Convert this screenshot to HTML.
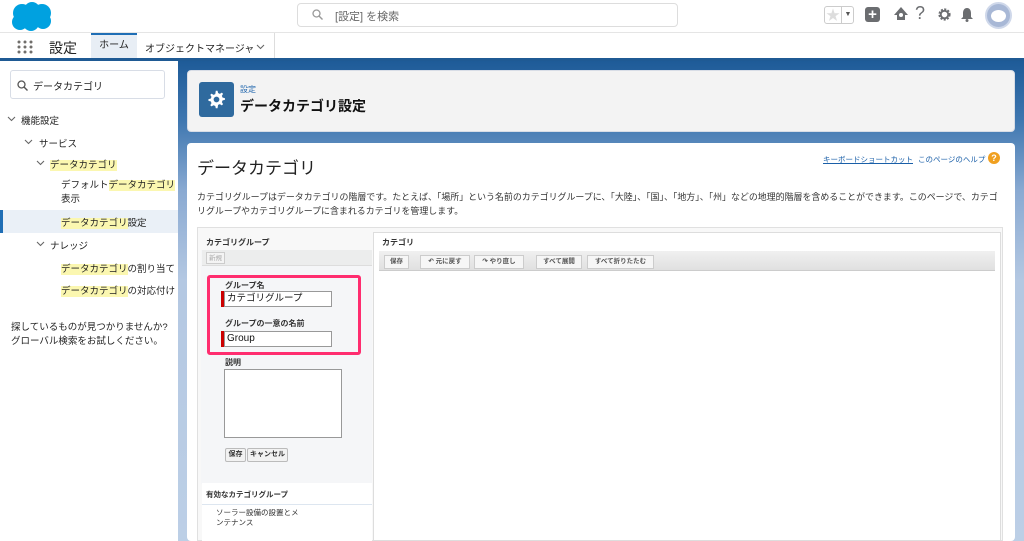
<!DOCTYPE html>
<html><head><meta charset="utf-8"><style>
*{box-sizing:border-box;margin:0;padding:0}
body{width:1024px;height:541px;overflow:hidden;font-family:"Liberation Sans","Noto Sans CJK JP",sans-serif;background:#fff;position:relative;color:#16325c}
.abs{position:absolute}
.hl{background:#fbf7b0}
.chev{position:absolute;width:9px;height:6px}
</style></head><body>
<svg width="0" height="0" style="position:absolute"><defs><symbol id="cv" viewBox="0 0 9 6"><path d="M1 1l3.5 3.5L8 1" fill="none" stroke="#666" stroke-width="1.1"/></symbol></defs></svg>
<!-- header -->
<div class="abs" style="left:0;top:0;width:1024px;height:33px;background:#fff;border-bottom:1px solid #e5e5e5"></div>
<svg class="abs" style="left:10px;top:2px" width="44" height="30" viewBox="0 0 44 30"><g fill="#00a1e0"><circle cx="12" cy="11" r="9"/><circle cx="22" cy="8" r="8"/><circle cx="32" cy="11" r="9"/><circle cx="10" cy="20" r="8"/><circle cx="21" cy="21" r="8"/><circle cx="33" cy="19" r="8"/></g></svg>
<div class="abs" style="left:297px;top:3px;width:381px;height:24px;border:1px solid #ddd;border-radius:4px;background:#fff"></div>
<svg class="abs" style="left:312px;top:9px" width="11" height="11" viewBox="0 0 11 11"><circle cx="4.5" cy="4.5" r="3.5" fill="none" stroke="#999" stroke-width="1.3"/><path d="M7 7l3.5 3.5" stroke="#999" stroke-width="1.4"/></svg>
<div class="abs" style="left:335px;top:8px;font-size:11px;color:#666">[設定] を検索</div>
<div class="abs" style="left:824px;top:6px;width:30px;height:18px;border:1px solid #ccc;border-radius:3px;background:#fff"></div>
<div class="abs" style="left:826px;top:5px;font-size:14px;color:#ddd">★</div>
<div class="abs" style="left:841px;top:6px;width:13px;height:18px;border-left:1px solid #ccc;font-size:7px;color:#555;text-align:center;line-height:18px">▼</div>
<div class="abs" style="left:865px;top:7px;width:15px;height:15px;background:#6b6d70;border-radius:3px;color:#fff;font-size:15px;line-height:15px;text-align:center;font-weight:bold">+</div>
<svg class="abs" style="left:893px;top:6px" width="16" height="16" viewBox="0 0 16 16"><path d="M8 1L1 9h3v5h8V9h3z" fill="#6b6d70"/><circle cx="8" cy="9" r="2" fill="#fff"/></svg>
<div class="abs" style="left:915px;top:3px;font-size:18px;color:#6b6d70">?</div>
<svg class="abs" style="left:937px;top:7px" width="15" height="15" viewBox="0 0 16 16"><circle cx="8" cy="8" r="5" fill="none" stroke="#6b6d70" stroke-width="3" stroke-dasharray="2 1.3"/><circle cx="8" cy="8" r="4" fill="none" stroke="#6b6d70" stroke-width="2"/></svg>
<svg class="abs" style="left:960px;top:7px" width="14" height="15" viewBox="0 0 14 15"><path d="M7 1C4 1 3 4 3 6v4L1 12h12l-2-2V6C11 4 10 1 7 1z" fill="#6b6d70"/><circle cx="7" cy="13.5" r="1.5" fill="#6b6d70"/></svg>
<div class="abs" style="left:985px;top:2px;width:27px;height:27px;border-radius:50%;background:#a8b8d6;border:2px solid #cfd8ea"></div>
<div class="abs" style="left:991px;top:10px;width:15px;height:12px;border-radius:50%;background:#fff"></div>
<!-- nav -->
<div class="abs" style="left:0;top:33px;width:1024px;height:27px;background:#fff"></div>
<div class="abs" style="left:0;top:58px;width:1024px;height:3px;background:#1f5a94"></div>
<svg class="abs" style="left:17px;top:40px" width="16" height="14" viewBox="0 0 16 14"><g fill="#706e6b"><circle cx="2" cy="2" r="1.5"/><circle cx="8" cy="2" r="1.5"/><circle cx="14" cy="2" r="1.5"/><circle cx="2" cy="7" r="1.5"/><circle cx="8" cy="7" r="1.5"/><circle cx="14" cy="7" r="1.5"/><circle cx="2" cy="12" r="1.5"/><circle cx="8" cy="12" r="1.5"/><circle cx="14" cy="12" r="1.5"/></g></svg>
<div class="abs" style="left:49px;top:38px;font-size:14px;color:#222">設定</div>
<div class="abs" style="left:91px;top:33px;width:46px;height:25px;background:#e8eef5;border-top:2px solid #1f6eb5;font-size:10px;line-height:22px;text-align:center;color:#222">ホーム</div>
<div class="abs" style="left:145px;top:40px;font-size:10px;color:#222">オブジェクトマネージャ</div>
<svg class="chev" style="left:256px;top:44px"><use href="#cv"/></svg>
<div class="abs" style="left:274px;top:33px;width:1px;height:25px;background:#ddd"></div>
<!-- background right -->
<div class="abs" style="left:178px;top:61px;width:846px;height:480px;background:linear-gradient(#1e5b98 0px,#3f77b0 60px,#8aaad2 130px,#b4c8e2 220px,#bccfe6 480px)"></div>
<!-- sidebar -->
<div class="abs" style="left:0;top:61px;width:178px;height:480px;background:#fff"></div>
<div class="abs" style="left:10px;top:70px;width:155px;height:29px;border:1px solid #d8dde6;border-radius:3px"></div>
<svg class="abs" style="left:17px;top:80px" width="11" height="11" viewBox="0 0 11 11"><circle cx="4.5" cy="4.5" r="3.5" fill="none" stroke="#555" stroke-width="1.3"/><path d="M7 7l3.5 3.5" stroke="#555" stroke-width="1.4"/></svg>
<div class="abs" style="left:33px;top:78px;font-size:10px;color:#222">データカテゴリ</div>
<div style="font-size:9.5px;color:#222">
<svg class="chev" style="left:7px;top:116px"><use href="#cv"/></svg><div class="abs" style="left:21px;top:113px">機能設定</div>
<svg class="chev" style="left:24px;top:139px"><use href="#cv"/></svg><div class="abs" style="left:39px;top:136px">サービス</div>
<svg class="chev" style="left:36px;top:160px"><use href="#cv"/></svg><div class="abs" style="left:50px;top:157px"><span class="hl">データカテゴリ</span></div>
<div class="abs" style="left:61px;top:179px;line-height:14px">デフォルト<span class="hl">データカテゴリ</span><br>表示</div>
<div class="abs" style="left:0;top:210px;width:178px;height:23px;background:#eaf0f7;border-left:3px solid #1f6eb5"></div>
<div class="abs" style="left:61px;top:215px"><span class="hl">データカテゴリ</span>設定</div>
<svg class="chev" style="left:36px;top:241px"><use href="#cv"/></svg><div class="abs" style="left:50px;top:238px">ナレッジ</div>
<div class="abs" style="left:61px;top:261px"><span class="hl">データカテゴリ</span>の割り当て</div>
<div class="abs" style="left:61px;top:283px"><span class="hl">データカテゴリ</span>の対応付け</div>
<div class="abs" style="left:11px;top:321px;line-height:14px">探しているものが見つかりませんか?<br>グローバル検索をお試しください。</div>
</div>
<!-- header card -->
<div class="abs" style="left:187px;top:70px;width:828px;height:62px;background:#f3f3f3;border:1px solid #d8dde6;border-radius:4px"></div>
<div class="abs" style="left:199px;top:82px;width:35px;height:35px;background:#2f6a9e;border-radius:3px"></div>
<svg class="abs" style="left:206px;top:89px" width="21" height="21" viewBox="0 0 24 24"><path fill="#fff" d="M12 2l2 0 .6 2.6 2 .9 2.3-1.4 1.4 1.4-1.4 2.3.9 2 2.6.6v2l-2.6.6-.9 2 1.4 2.3-1.4 1.4-2.3-1.4-2 .9L14 22h-2l-.6-2.6-2-.9-2.3 1.4-1.4-1.4 1.4-2.3-.9-2L3.6 13.6v-2l2.6-.6.9-2-1.4-2.3 1.4-1.4 2.3 1.4 2-.9z" transform="translate(-.8 0)"/><circle cx="12" cy="12" r="3.3" fill="#2f6a9e"/></svg>
<div class="abs" style="left:240px;top:84px;font-size:8px;color:#2a6cb0">設定</div>
<div class="abs" style="left:240px;top:96px;font-size:14px;font-weight:bold;color:#111">データカテゴリ設定</div>
<!-- main card -->
<div class="abs" style="left:187px;top:143px;width:828px;height:398px;background:#fff;border-radius:4px"></div>
<div class="abs" style="left:197px;top:154px;font-size:17px;color:#222">データカテゴリ</div>
<div class="abs" style="left:823px;top:154px;font-size:7.5px;color:#1a5fa8;text-decoration:underline">キーボードショートカット</div>
<div class="abs" style="left:918px;top:154px;font-size:7.5px;color:#1a5fa8">このページのヘルプ</div>
<div class="abs" style="left:988px;top:152px;width:12px;height:12px;border-radius:50%;background:#f0a020;color:#fff;font-size:9px;text-align:center;line-height:12px;font-weight:bold">?</div>
<div class="abs" style="left:197px;top:190px;width:808px;font-size:8.95px;line-height:14px;color:#333">カテゴリグループはデータカテゴリの階層です。たとえば、「場所」という名前のカテゴリグループに、「大陸」、「国」、「地方」、「州」などの地理的階層を含めることができます。このページで、カテゴリグループやカテゴリグループに含まれるカテゴリを管理します。</div>
<!-- inner -->
<div class="abs" style="left:197px;top:227px;width:806px;height:314px;border:1px solid #e0e0e0;background:#f8f8f8"></div>
<div class="abs" style="left:201px;top:250px;width:171px;height:234px;background:#f5f6f8"></div>
<div class="abs" style="left:206px;top:237px;font-size:8px;font-weight:bold;color:#333">カテゴリグループ</div>
<div class="abs" style="left:202px;top:250px;width:170px;height:16px;background:#eceded;border-bottom:1px solid #ddd"></div>
<div class="abs" style="left:206px;top:252px;width:19px;height:12px;border:1px solid #ccc;font-size:6.5px;color:#aaa;text-align:center;line-height:11px;background:#f4f4f4">新規</div>
<div class="abs" style="left:207px;top:275px;width:154px;height:80px;border:3px solid #ff2d6f;border-radius:3px"></div>
<div class="abs" style="left:225px;top:280px;font-size:8px;font-weight:bold;color:#333">グループ名</div>
<div class="abs" style="left:221px;top:291px;width:3px;height:16px;background:#c00"></div>
<div class="abs" style="left:224px;top:291px;width:108px;height:16px;border:1px solid #999;background:#fff;font-size:9.5px;color:#111;line-height:14px;padding-left:2px">カテゴリグループ</div>
<div class="abs" style="left:225px;top:318px;font-size:8px;font-weight:bold;color:#333">グループの一意の名前</div>
<div class="abs" style="left:221px;top:331px;width:3px;height:16px;background:#c00"></div>
<div class="abs" style="left:224px;top:331px;width:108px;height:16px;border:1px solid #999;background:#fff;font-size:10px;color:#111;line-height:14px;padding-left:2px">Group</div>
<div class="abs" style="left:225px;top:357px;font-size:8px;font-weight:bold;color:#333">説明</div>
<div class="abs" style="left:224px;top:369px;width:118px;height:69px;border:1px solid #999;background:#fff"></div>
<div class="abs" style="left:225px;top:448px;width:21px;height:14px;border:1px solid #bbb;border-radius:2px;background:#f2f2f2;font-size:7px;font-weight:bold;text-align:center;line-height:12px;color:#333">保存</div>
<div class="abs" style="left:247px;top:448px;width:41px;height:14px;border:1px solid #bbb;border-radius:2px;background:#f2f2f2;font-size:7px;font-weight:bold;text-align:center;line-height:12px;color:#333">キャンセル</div>
<div class="abs" style="left:202px;top:483px;width:170px;height:58px;background:#fff"></div>
<div class="abs" style="left:206px;top:489px;font-size:7.5px;font-weight:bold;color:#333">有効なカテゴリグループ</div>
<div class="abs" style="left:202px;top:504px;width:170px;height:1px;background:#dde6f0"></div>
<div class="abs" style="left:216px;top:508px;font-size:7.5px;line-height:10px;color:#333">ソーラー設備の設置とメ<br>ンテナンス</div>
<div class="abs" style="left:373px;top:232px;width:628px;height:309px;background:#fff;border:1px solid #ddd"></div>
<div class="abs" style="left:382px;top:237px;font-size:8px;font-weight:bold;color:#333">カテゴリ</div>
<div class="abs" style="left:379px;top:251px;width:616px;height:20px;background:linear-gradient(#f0f0f0,#e0e0e0);border-bottom:1px solid #ccc"></div>
<div style="font-size:6.5px;color:#555;font-weight:bold">
<div class="abs" style="left:384px;top:255px;width:25px;height:14px;border:1px solid #ccc;background:#f6f6f6;text-align:center;line-height:12px">保存</div>
<div class="abs" style="left:420px;top:255px;width:50px;height:14px;border:1px solid #ccc;background:#f6f6f6;text-align:center;line-height:12px">↶ 元に戻す</div>
<div class="abs" style="left:474px;top:255px;width:50px;height:14px;border:1px solid #ccc;background:#f6f6f6;text-align:center;line-height:12px">↷ やり直し</div>
<div class="abs" style="left:536px;top:255px;width:46px;height:14px;border:1px solid #ccc;background:#f6f6f6;text-align:center;line-height:12px">すべて展開</div>
<div class="abs" style="left:587px;top:255px;width:67px;height:14px;border:1px solid #ccc;background:#f6f6f6;text-align:center;line-height:12px">すべて折りたたむ</div>
</div>
</body></html>
